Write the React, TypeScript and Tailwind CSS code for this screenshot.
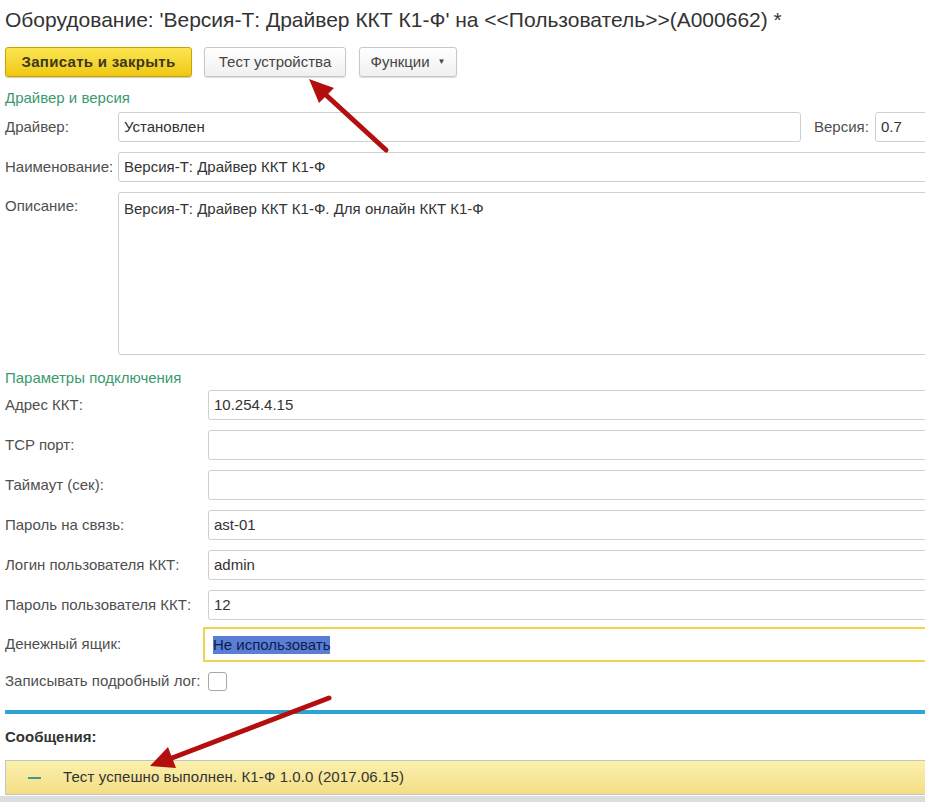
import React from 'react';

const Label: React.FC<{ text: string; w: string }> = ({ text, w }) => (
  <div className={`${w} shrink-0 text-[15px] text-[#4f4f4f]`}>{text}</div>
);

const Field: React.FC<{ value?: string }> = ({ value }) => (
  <div className="flex-1 h-[30px] border border-[#cfcfcf] rounded-[3px] bg-white flex items-center px-[5px] text-[15px] text-[#333]">
    {value}
  </div>
);

const Row: React.FC<{ label: string; value?: string; w: string; className?: string }> = ({ label, value, w, className }) => (
  <div className={`flex items-center h-[30px] ${className || ''}`}>
    <Label text={label} w={w} />
    <Field value={value} />
  </div>
);

const App: React.FC = () => {
  return (
    <div className="relative w-[925px] h-[802px] overflow-hidden bg-white font-['Liberation_Sans',Arial,sans-serif]">
      <div className="w-[945px]">
        <div className="pl-[5px] pt-[7px] h-[40px] text-[21px] leading-[26px] text-[#333] whitespace-nowrap">
          Оборудование: 'Версия-Т: Драйвер ККТ К1-Ф' на &lt;&lt;Пользователь&gt;&gt;(А000662) *
        </div>

        <div className="mt-[7px] pl-[5px] flex h-[30px]">
          <button className="w-[187px] h-[30px] rounded-[3px] border border-[#c9a400] bg-gradient-to-b from-[#fbe54f] to-[#f0c808] text-[15px] tracking-[0.3px] font-bold text-[#3a3a1a] shadow-[0_1px_1px_rgba(0,0,0,0.2)]">
            Записать и закрыть
          </button>
          <button className="ml-[12px] w-[142px] h-[30px] rounded-[3px] border border-[#c8c8c8] bg-gradient-to-b from-white to-[#f0f0f0] text-[15px] text-[#444] shadow-[0_1px_1px_rgba(0,0,0,0.15)]">
            Тест устройства
          </button>
          <button className="ml-[13px] w-[98px] h-[30px] rounded-[3px] border border-[#c8c8c8] bg-gradient-to-b from-white to-[#f0f0f0] text-[15px] text-[#444] shadow-[0_1px_1px_rgba(0,0,0,0.15)] flex items-center justify-center gap-[8px]">
            <span>Функции</span>
            <span className="text-[8px] text-[#444]">▼</span>
          </button>
        </div>

        <div className="mt-[11px] pl-[5px] h-[20px] leading-[20px] text-[15px] text-[#3a9a6f]">Драйвер и версия</div>

        <div className="pl-[5px] mt-[4px] flex flex-col gap-[10px]">
          <div className="flex items-center h-[30px]">
            <Label text="Драйвер:" w="w-[113px]" />
            <div className="w-[683px] h-[30px] border border-[#cfcfcf] rounded-[3px] flex items-center px-[5px] text-[15px] text-[#333]">Установлен</div>
            <div className="ml-[13px] w-[61px] text-[15px] text-[#4f4f4f]">Версия:</div>
            <Field value="0.7" />
          </div>
          <Row label="Наименование:" value="Версия-Т: Драйвер ККТ К1-Ф" w="w-[113px]" />
          <div className="flex h-[163px]">
            <div className="w-[113px] shrink-0 pt-[3px] text-[15px] text-[#4f4f4f]">Описание:</div>
            <div className="flex-1 border border-[#cfcfcf] rounded-[3px] px-[5px] pt-[5px] text-[15px] text-[#333]">
              Версия-Т: Драйвер ККТ К1-Ф. Для онлайн ККТ К1-Ф
            </div>
          </div>
        </div>

        <div className="mt-[13px] pl-[5px] h-[20px] leading-[20px] text-[15px] text-[#3a9a6f]">Параметры подключения</div>

        <div className="pl-[5px] mt-[2px] flex flex-col gap-[10px]">
          <Row label="Адрес ККТ:" value="10.254.4.15" w="w-[203px]" />
          <Row label="TCP порт:" w="w-[203px]" />
          <Row label="Таймаут (сек):" w="w-[203px]" />
          <Row label="Пароль на связь:" value="ast-01" w="w-[203px]" />
          <Row label="Логин пользователя ККТ:" value="admin" w="w-[203px]" />
          <Row label="Пароль пользователя ККТ:" value="12" w="w-[203px]" />
        </div>

        <div className="pl-[5px] mt-[7px] flex items-center h-[35px]">
          <Label text="Денежный ящик:" w="w-[198px]" />
          <div className="flex-1 h-[35px] border-2 border-[#f0d44c] bg-white flex items-center px-[8px] text-[15px]">
            <span className="bg-[#5a7ed6] text-[#0d1b4a] leading-[18px]">Не использовать</span>
          </div>
        </div>

        <div className="pl-[5px] mt-[9px] flex items-center h-[20px]">
          <div className="w-[203px] shrink-0 text-[15px] text-[#4f4f4f] whitespace-nowrap">Записывать подробный лог:</div>
          <div className="w-[19px] h-[19px] border border-[#a8a8a8] rounded-[3px] bg-white" />
        </div>

        <div className="ml-[5px] mt-[19px] h-[4px] bg-[#2da5d3]" />

        <div className="mt-[13px] pl-[5px] h-[20px] leading-[20px] text-[15px] font-bold text-[#333]">Сообщения:</div>

        <div className="ml-[5px] mt-[13px] h-[35px] border border-[#c4c4c4] bg-gradient-to-b from-[#fbf0ad] to-[#f3de84] flex items-center">
          <div className="ml-[22px] w-[13px] h-[2px] bg-[#3a9a8c]" />
          <div className="ml-[22px] text-[15px] tracking-[0.1px] text-[#333]">Тест успешно выполнен. К1-Ф 1.0.0 (2017.06.15)</div>
        </div>

        <div className="mt-[1px] h-[6px] bg-[#dcdcdc]" />
      </div>

      <svg className="absolute inset-0 pointer-events-none" width="925" height="802">
        <line x1="386" y1="150" x2="326" y2="95" stroke="#b30f0f" strokeWidth="5" strokeLinecap="round" />
        <polygon points="309,79 334,88 319,103" fill="#b30f0f" />
        <line x1="329" y1="698" x2="172" y2="758" stroke="#b30f0f" strokeWidth="5" strokeLinecap="round" />
        <polygon points="150,766 176,768 168,747" fill="#b30f0f" />
      </svg>
    </div>
  );
};

export default App;
